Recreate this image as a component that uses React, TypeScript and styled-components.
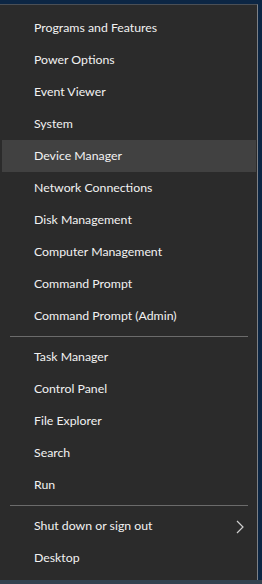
import React, { FC } from 'react';
import styled, { createGlobalStyle } from 'styled-components';

const GlobalStyle = createGlobalStyle`
  html, body {
    margin: 0;
    padding: 0;
    background: #0c2644;
    height: 584px;
    overflow: hidden;
  }
`;

type Item = { label: string; active?: boolean; submenu?: boolean };

const groups: Item[][] = [
  [
    { label: 'Programs and Features' },
    { label: 'Power Options' },
    { label: 'Event Viewer' },
    { label: 'System' },
    { label: 'Device Manager', active: true },
    { label: 'Network Connections' },
    { label: 'Disk Management' },
    { label: 'Computer Management' },
    { label: 'Command Prompt' },
    { label: 'Command Prompt (Admin)' },
  ],
  [
    { label: 'Task Manager' },
    { label: 'Control Panel' },
    { label: 'File Explorer' },
    { label: 'Search' },
    { label: 'Run' },
  ],
  [{ label: 'Shut down or sign out', submenu: true }, { label: 'Desktop' }],
];

const App: FC = () => {
  return (
    <Screen>
      <GlobalStyle />
      <Menu>
        {groups.map((group, gi) => (
          <React.Fragment key={gi}>
            {gi > 0 && <Separator />}
            <Group>
              {group.map((item) => (
                <Row key={item.label} active={item.active}>
                  <Label>{item.label}</Label>
                  {item.submenu && (
                    <Chevron width="8" height="14" viewBox="0 0 8 14">
                      <path d="M1 1 L7 7 L1 13" fill="none" stroke="#cfcfcf" strokeWidth="1.2" />
                    </Chevron>
                  )}
                </Row>
              ))}
            </Group>
          </React.Fragment>
        ))}
      </Menu>
      <Taskbar />
    </Screen>
  );
};

export default App;

const Screen = styled.div`
  width: 262px;
  height: 584px;
  display: flex;
  flex-direction: column;
  padding-top: 4px;
  box-sizing: border-box;
`;

const Menu = styled.div`
  width: 258px;
  height: 576px;
  box-sizing: border-box;
  background: #2b2b2b;
  border-top: 1px solid #4a4f56;
  border-right: 1px solid #7d8187;
  padding: 7px 0 0;
  display: flex;
  flex-direction: column;
  font-family: Lato, 'Noto Sans', sans-serif;
`;

const Group = styled.div`
  display: flex;
  flex-direction: column;
`;

const Row = styled.div<{ active?: boolean }>`
  height: 32px;
  margin: 0 1px 0 2px;
  padding: 1px 12px 0 32px;
  box-sizing: border-box;
  display: flex;
  align-items: center;
  justify-content: space-between;
  background: ${(p) => (p.active ? '#414141' : 'transparent')};
`;

const Label = styled.span`
  color: #f2f2f2;
  font-size: 12.3px;
  line-height: 1;
  white-space: nowrap;
`;

const Chevron = styled.svg`
  display: block;
`;

const Separator = styled.div`
  height: 1px;
  margin: 4px 9px 4px 10px;
  background: #6b6b6b;
`;

const Taskbar = styled.div`
  flex: 1;
  background: #33414f;
`;
